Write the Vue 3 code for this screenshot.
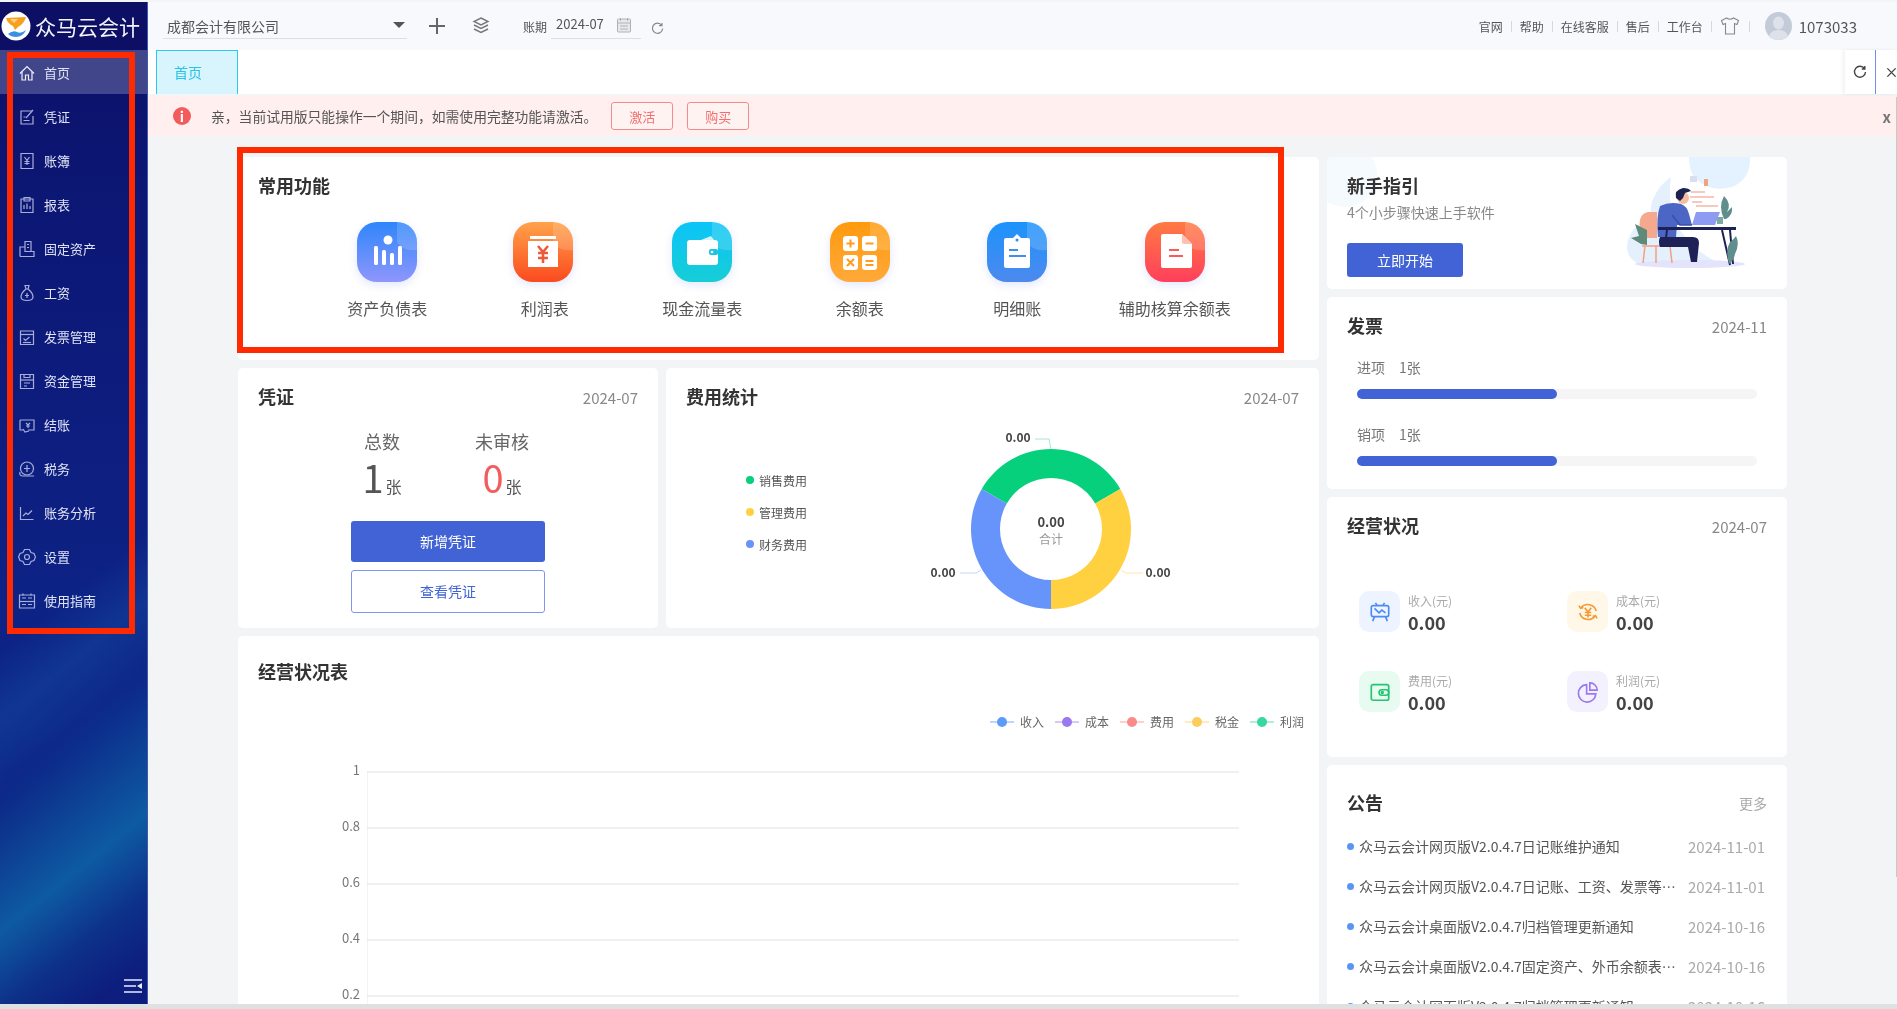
<template>
  <div class="page">
    <div class="shell">
      <aside class="sidebar">
        <div class="brand">
          <svg class="brand-logo" viewBox="0 0 30 30">
            <circle cx="15" cy="15" r="14.5" fill="#fff" />
            <path d="M5 7 L25 6 Q23 13 17 16 L14 19 L12 15 Q7 13 5 7Z" fill="#f5a11f" />
            <path d="M9 8 L17 8 L13 12Z" fill="#fdd27a" />
            <path d="M7 23 Q12 19 16 21 Q20 23 25 19 Q22 26 15 26 Q10 26 7 23Z" fill="#3d8fe0" />
          </svg>
          <span class="brand-name">众马云会计</span>
        </div>
        <nav class="nav">
          <a v-for="(item, i) in navItems" :key="item.label" class="nav-item" :class="{ active: i === 0 }">
            <svg class="nav-icon" viewBox="0 0 18 18">
              <path v-for="d in item.icon" :key="d" :d="d" />
            </svg>
            <span>{{ item.label }}</span>
          </a>
        </nav>
        <svg class="collapse" viewBox="0 0 20 16">
          <path d="M1 2h18M1 8h12M1 14h18" />
          <path class="solid" d="M19 5v6l-5-3z" />
        </svg>
      </aside>

      <div class="main">
        <header class="topbar">
          <div class="company">
            <span>成都会计有限公司</span>
            <i class="caret"></i>
          </div>
          <svg class="bar-plus" viewBox="0 0 18 18"><path d="M9 1v16M1 9h16" /></svg>
          <svg class="bar-layers" viewBox="0 0 18 18">
            <path d="M9 1l7 3.5-7 3.5-7-3.5z" />
            <path d="M2 8l7 3.5L16 8" />
            <path d="M2 12l7 3.5 7-3.5" />
          </svg>
          <span class="period-label">账期</span>
          <div class="period">
            <span>2024-07</span>
            <svg class="cal" viewBox="0 0 16 16">
              <rect x="1.5" y="2" width="13" height="13" rx="1" />
              <path d="M1.5 6h13M4.5 1v3M11.5 1v3M4 9h8M4 12h8" />
            </svg>
          </div>
          <svg class="bar-refresh" viewBox="0 0 14 14"><path d="M11.5 3.5A5.5 5.5 0 1 0 12.5 7M11.8 1v3h-3" /></svg>
          <div class="top-links">
            <template v-for="link in topLinks" :key="link">
              <span>{{ link }}</span>
              <i class="sep"></i>
            </template>
            <svg class="shirt" viewBox="0 0 20 20">
              <path d="M6.5 2L1.5 4.5l1.5 4 2.5-1V18h9V7.5l2.5 1 1.5-4-5-2.5q-3.5 2.5-7 0z" />
            </svg>
            <i class="sep last"></i>
            <svg class="avatar" viewBox="0 0 27 28">
              <ellipse cx="13.5" cy="14" rx="13.5" ry="14" fill="#c3cbd9" />
              <ellipse cx="13.5" cy="11" rx="5.5" ry="6.5" fill="#dde2ea" />
              <path d="M4 25q1-7 9.5-7t9.5 7q-4 3-9.5 3t-9.5-3z" fill="#dde2ea" />
            </svg>
            <span class="user-id">1073033</span>
          </div>
        </header>

        <div class="tabs">
          <div class="tab">首页</div>
          <div class="tab-tools">
            <svg class="tool-refresh" viewBox="0 0 14 14"><path d="M11.5 3.5A5.5 5.5 0 1 0 12.5 7M11.8 1v3h-3" /></svg>
            <i class="tool-line"></i>
            <svg class="tool-close" viewBox="0 0 12 12"><path d="M1.5 1.5l9 9M10.5 1.5l-9 9" /></svg>
          </div>
        </div>

        <div class="alert">
          <span class="alert-icon">i</span>
          <span class="alert-text">亲，当前试用版只能操作一个期间，如需使用完整功能请激活。</span>
          <button class="alert-btn">激活</button>
          <button class="alert-btn">购买</button>
          <span class="alert-x">x</span>
        </div>

        <div class="content">
          <div class="col-left">
            <section class="card shortcuts">
              <h3 class="card-title">常用功能</h3>
              <div class="shortcut-grid">
                <div v-for="s in shortcuts" :key="s.key" class="shortcut">
                  <svg class="shortcut-icon" viewBox="0 0 60 60">
                    <defs>
                      <linearGradient :id="'g-' + s.key" x1="0" y1="0" x2="0" y2="1">
                        <stop offset="0" :stop-color="s.from" />
                        <stop offset="1" :stop-color="s.to" />
                      </linearGradient>
                    </defs>
                    <rect width="60" height="60" rx="20" :fill="'url(#g-' + s.key + ')'" />
                    <path d="M40 0h0a20 20 0 0 1 20 20v8q-14 2-20-8z" fill="#fff" opacity=".16" />
                    <template v-if="s.key === 'balance'">
                      <circle cx="31" cy="18" r="4.5" fill="#fff" />
                      <rect x="17" y="24" width="4" height="19" rx="1.5" fill="#fff" />
                      <rect x="25" y="28" width="4" height="15" rx="1.5" fill="#fff" />
                      <rect x="33" y="31" width="4" height="12" rx="1.5" fill="#fff" />
                      <rect x="41" y="24" width="4" height="19" rx="1.5" fill="#fff" />
                    </template>
                    <template v-else-if="s.key === 'profit'">
                      <rect x="17" y="14" width="26" height="3" fill="#fff" />
                      <rect x="15" y="19" width="30" height="26" fill="#fff" />
                      <path d="M25 24l5 6 5-6M30 30v11M25 31h10M25 36h10" fill="none" stroke="#ee5a38" stroke-width="2.5" />
                    </template>
                    <template v-else-if="s.key === 'cash'">
                      <path d="M29 18l10-4 3 4z" fill="#fff" opacity=".8" />
                      <rect x="15" y="18" width="31" height="25" rx="3" fill="#fff" />
                      <rect x="37" y="27" width="9" height="6" rx="2" fill="#1cc5e0" />
                      <circle cx="40" cy="30" r="1.3" fill="#fff" />
                    </template>
                    <template v-else-if="s.key === 'sum'">
                      <rect x="13" y="14" width="15" height="15" rx="3" fill="#fff" />
                      <rect x="32" y="14" width="15" height="15" rx="3" fill="#fff" />
                      <rect x="13" y="33" width="15" height="15" rx="3" fill="#fff" />
                      <rect x="32" y="33" width="15" height="15" rx="3" fill="#fff" />
                      <path d="M16.5 21.5h8M20.5 17.5v8M35.5 21.5h8M17 37l7 7M24 37l-7 7M35.5 39h8M35.5 43h8" stroke="#ff9c1a" stroke-width="2" />
                    </template>
                    <template v-else-if="s.key === 'detail'">
                      <path d="M19 16h7l4-4 4 4h7a2 2 0 0 1 2 2v26a2 2 0 0 1-2 2H19a2 2 0 0 1-2-2V18a2 2 0 0 1 2-2z" fill="#fff" />
                      <circle cx="30" cy="18" r="1.5" fill="#2a8cf5" />
                      <path d="M22 28h9M22 34h17" stroke="#3f8ef0" stroke-width="2.2" />
                    </template>
                    <template v-else>
                      <path d="M18 12h19l10 10v22a2 2 0 0 1-2 2H18a2 2 0 0 1-2-2V14a2 2 0 0 1 2-2z" fill="#fff" />
                      <path d="M37 12l10 10H39a2 2 0 0 1-2-2z" fill="#ffc0b0" />
                      <path d="M24 28h10M24 34h14" stroke="#fb5a58" stroke-width="2.2" />
                    </template>
                  </svg>
                  <span class="shortcut-label">{{ s.label }}</span>
                </div>
              </div>
            </section>

            <div class="row-mid">
              <section class="card voucher">
                <div class="card-head">
                  <h3 class="card-title">凭证</h3>
                  <span class="card-date">2024-07</span>
                </div>
                <div class="voucher-stats">
                  <div class="stat">
                    <span class="stat-label">总数</span>
                    <span class="stat-num"><b>1</b><small>张</small></span>
                  </div>
                  <div class="stat">
                    <span class="stat-label">未审核</span>
                    <span class="stat-num red"><b>0</b><small>张</small></span>
                  </div>
                </div>
                <button class="btn-primary">新增凭证</button>
                <button class="btn-outline">查看凭证</button>
              </section>

              <section class="card fees">
                <div class="card-head">
                  <h3 class="card-title">费用统计</h3>
                  <span class="card-date">2024-07</span>
                </div>
                <div class="fees-body">
                  <ul class="fee-legend">
                    <li v-for="f in feeLegend" :key="f.label">
                      <i class="legend-dot" :class="f.cls"></i>{{ f.label }}
                    </li>
                  </ul>
                  <svg class="donut" viewBox="921 420 260 208">
                    <path :d="ringSeg(-60, 60)" fill="#06d07c" />
                    <path :d="ringSeg(60, 180)" fill="#ffd040" />
                    <path :d="ringSeg(180, 300)" fill="#6694fb" />
                    <path d="M1051 449l-2-10h-14" class="lead green" />
                    <path d="M1121 570l5 3h17" class="lead yellow" />
                    <path d="M981 570l-5 3h-16" class="lead blue" />
                    <text x="1018" y="442" class="pie-val" text-anchor="middle">0.00</text>
                    <text x="943" y="577" class="pie-val" text-anchor="middle">0.00</text>
                    <text x="1158" y="577" class="pie-val" text-anchor="middle">0.00</text>
                    <text x="1051" y="527" class="pie-total" text-anchor="middle">0.00</text>
                    <text x="1051" y="544" class="pie-sub" text-anchor="middle">合计</text>
                  </svg>
                </div>
              </section>
            </div>

            <section class="card trend">
              <h3 class="card-title">经营状况表</h3>
              <div class="trend-legend">
                <span v-for="t in trendLegend" :key="t.label" class="trend-item">
                  <i class="trend-mark" :class="t.cls"></i>{{ t.label }}
                </span>
              </div>
              <svg class="trend-grid" viewBox="238 760 1081 250">
                <path d="M367.5 773V1010" class="axis" />
                <g v-for="g in gridLines" :key="g.label">
                  <path :d="`M367 ${g.y}H1239`" class="grid-line" />
                  <text x="360" :y="g.y + 3" class="axis-label" text-anchor="end">{{ g.label }}</text>
                </g>
              </svg>
            </section>
          </div>

          <div class="col-right">
            <section class="card guide">
              <i class="guide-blob"></i>
              <div class="guide-text">
                <h3 class="card-title">新手指引</h3>
                <p class="guide-sub">4个小步骤快速上手软件</p>
                <button class="btn-start">立即开始</button>
              </div>
              <svg class="guide-art" viewBox="1627 157 124 112">
                <path d="M1689 157h61q1 22-18 30-24 6-38-10-5-8-5-20z" fill="#e4f1fe" />
                <path d="M1671 177q-12 8-18 22-3 8-2 14l-6 6q-19 14-18 30 2 14 20 17h80q-30-10-50-40-10-20-6-49z" fill="#e5f0fd" />
                <ellipse cx="1690" cy="264" rx="55" ry="4" fill="#e3e4fb" />
                <path d="M1691 192h14M1690 197h24M1692 202h10M1696 206h22" stroke="#f5b7a5" stroke-width="1.5" />
                <rect x="1690" y="176" width="7" height="6" fill="#d8dfee" />
                <rect x="1704" y="179" width="4" height="7" fill="#f3a27f" />
                <path d="M1640 228q-2-14 8-16h9v26h-14z" fill="#f4a98e" />
                <path d="M1642 246h30M1645 246l-2 17M1670 246l2 17M1656 246v17" stroke="#f2a080" stroke-width="1.5" fill="none" />
                <path d="M1647 230l-12-6 4 12-8 2 10 6 6 1z" fill="#5e8a7a" />
                <path d="M1660 206q10-5 21-2 6 2 8 10l3 11h-15l-1 12h-18q-2-20 2-31z" fill="#4c66c5" />
                <path d="M1672 215l8 10h12" stroke="#3a4fa5" stroke-width="1.5" fill="none" />
                <circle cx="1683" cy="198" r="6" fill="#f6bd9e" />
                <path d="M1676 198q-2-8 7-10 6 0 8 3l-6 2-2 5-3 3z" fill="#1d2350" />
                <path d="M1660 237h33q6 0 6 6l-2 19h-6l-3-15h-28q-2-5 0-10z" fill="#1d2156" />
                <path d="M1658 227h78v3h-78z" fill="#1d2156" />
                <path d="M1667 230l-1 8M1722 230l8 35M1730 230l3 34" stroke="#1d2156" stroke-width="2" fill="none" />
                <path d="M1696 212h24l-5 13h-23z" fill="#8d9bf2" />
                <path d="M1717 217h6v7h-6z" fill="#7eaaa5" />
                <path d="M1724 219q-6-12 0-23 8 8 3 16l5-5q1 8-6 12z" fill="#5f8e8c" />
                <path d="M1729 264q-4-14 1-22 4-3 6-6 4 8-1 18-1 6-6 10z" fill="#5f8e8c" />
              </svg>
            </section>

            <section class="card invoice">
              <div class="card-head">
                <h3 class="card-title">发票</h3>
                <span class="card-date">2024-11</span>
              </div>
              <div v-for="b in invoiceBars" :key="b.label" class="inv-row">
                <div class="inv-label"><span>{{ b.label }}</span><span>{{ b.count }}</span></div>
                <div class="inv-track">
                  <div class="inv-fill" :style="{ width: b.pct + '%' }"></div>
                </div>
              </div>
            </section>

            <section class="card business">
              <div class="card-head">
                <h3 class="card-title">经营状况</h3>
                <span class="card-date">2024-07</span>
              </div>
              <div class="biz-grid">
                <div v-for="b in bizItems" :key="b.label" class="biz-item">
                  <div class="biz-icon" :class="b.cls">
                    <svg viewBox="0 0 24 24">
                      <template v-if="b.cls === 'income'">
                        <rect x="2.5" y="5" width="19" height="12" rx="2" />
                        <path d="M7 2l2 3M17 2l-2 3M6 17l-2 5M18 17l2 5M6 8l5 5 3-3 4 3" />
                      </template>
                      <template v-else-if="b.cls === 'cost'">
                        <path d="M4 8A9.5 9.5 0 0 1 21 11M20 16A9.5 9.5 0 0 1 3 13" />
                        <path d="M2 5l2 3 3-1M22 19l-2-3-3 1M8.5 7.5L12 12l3.5-4.5M12 12v6M8.5 12.5h7M8.5 15.5h7" />
                      </template>
                      <template v-else-if="b.cls === 'fee'">
                        <rect x="2.5" y="4" width="19" height="17" rx="2" />
                        <rect x="11" y="9.5" width="10.5" height="6" rx="3" />
                        <circle cx="14.5" cy="12.5" r="1" />
                      </template>
                      <template v-else>
                        <path d="M10.5 4A9.5 9.5 0 1 0 20.5 14H10.5z" />
                        <path d="M14 2a8 8 0 0 1 8 8h-8z" />
                      </template>
                    </svg>
                  </div>
                  <div class="biz-text">
                    <span class="biz-label">{{ b.label }}</span>
                    <span class="biz-value">{{ b.value }}</span>
                  </div>
                </div>
              </div>
            </section>

            <section class="card notice">
              <div class="card-head">
                <h3 class="card-title">公告</h3>
                <span class="card-more">更多</span>
              </div>
              <ul class="notice-list">
                <li v-for="n in notices" :key="n.title + n.date">
                  <i class="notice-dot"></i>
                  <span class="notice-title">{{ n.title }}</span>
                  <span class="notice-date">{{ n.date }}</span>
                </li>
              </ul>
            </section>
          </div>
        </div>
      </div>
    </div>

    <!-- red marks and the scroll thumb sit over the screenshot -->
    <i class="scroll-thumb"></i>
    <i class="mark mark-nav"></i>
    <i class="mark mark-func"></i>
  </div>
</template>

<script setup>
const navItems = [
  { label: '首页', icon: ['M2 9.5L9 2.5l7 7', 'M4 8v8h3.5v-5h3v5H14V8'] },
  { label: '凭证', icon: ['M14 3H3v13h12V8', 'M8 10l7-8', 'M5.5 9h2M5.5 12.5h6'] },
  { label: '账簿', icon: ['M3 1.5h12v15H3z', 'M6.5 5l2.5 3.5L11.5 5M9 8.5V13M6.5 9.5h5M6.5 11.5h5'] },
  { label: '报表', icon: ['M3 3h12v13.5H3z', 'M6 1.5h6V5H6z', 'M6 13V9M9 13V7.5M12 13v-3'] },
  { label: '固定资产', icon: ['M7 1.5h6v10H7z', 'M2 16.5h14v-5h-3', 'M2 16.5V7h5', 'M9 4.5h2M9 7.5h2'] },
  { label: '工资', icon: ['M7 1.5h4L10 5H8z', 'M8 5Q3 9 3 13q0 3.5 6 3.5t6-3.5Q15 9 10 5', 'M9 9v5M7 11.5h4'] },
  { label: '发票管理', icon: ['M2.5 3h13v13.5h-13z', 'M2.5 6.5h13', 'M5.5 10.5l2 2 4-3.5', 'M5 14.5h8'] },
  { label: '资金管理', icon: ['M2.5 2.5h13v14h-13z', 'M2.5 8h13', 'M6 2.5v3h6v-3', 'M6 11h6M6 14h3'] },
  { label: '结账', icon: ['M2 4h14v10h-6', 'M2 4v10h3', 'M8 7l2 2 2-2M10 9v3M8 10h4', 'M5 13l2 3 4-1'] },
  { label: '税务', icon: ['M9 2a6.5 6.5 0 1 1 0 13 6.5 6.5 0 0 1 0-13z', 'M2 12q-1 4 3 4h11', 'M6 8.5h6M9 5v7'] },
  { label: '账务分析', icon: ['M2.5 3v12.5h13', 'M5 12l3-3 2 1.5 4-4'] },
  { label: '设置', icon: ['M6.5 1.5h5l1.5 3 3 1L17.5 9 16 12.5l-3 1-1.5 3h-5L5 13.5l-3-1L.5 9 2 5.5l3-1z', 'M9 6.5a2.5 2.5 0 1 1 0 5 2.5 2.5 0 0 1 0-5z'] },
  { label: '使用指南', icon: ['M1.5 3h15v13h-15z', 'M1.5 9.5h15', 'M4 6h4M10 6h4M4 12.5h4M10 12.5h4', 'M5 1.5v2M13 1.5v2'] }
]

const topLinks = ['官网', '帮助', '在线客服', '售后', '工作台']

const shortcuts = [
  { key: 'balance', label: '资产负债表', from: '#2f86fb', to: '#8f96fc' },
  { key: 'profit', label: '利润表', from: '#ffa24a', to: '#fb4a1e' },
  { key: 'cash', label: '现金流量表', from: '#0cc4f7', to: '#16cdd6' },
  { key: 'sum', label: '余额表', from: '#ff9a0c', to: '#ffa93a' },
  { key: 'detail', label: '明细账', from: '#1c93fb', to: '#4d89ee' },
  { key: 'aux', label: '辅助核算余额表', from: '#ff7a42', to: '#ff3f5c' }
]

const feeLegend = [
  { label: '销售费用', cls: 'green' },
  { label: '管理费用', cls: 'yellow' },
  { label: '财务费用', cls: 'blue' }
]

const trendLegend = [
  { label: '收入', cls: 'c-income' },
  { label: '成本', cls: 'c-cost' },
  { label: '费用', cls: 'c-fee' },
  { label: '税金', cls: 'c-tax' },
  { label: '利润', cls: 'c-profit' }
]

const gridLines = [
  { label: '1', y: 773 },
  { label: '0.8', y: 829 },
  { label: '0.6', y: 885 },
  { label: '0.4', y: 941 },
  { label: '0.2', y: 997 }
]

const invoiceBars = [
  { label: '进项', count: '1张', pct: 50 },
  { label: '销项', count: '1张', pct: 50 }
]

const bizItems = [
  { label: '收入(元)', value: '0.00', cls: 'income' },
  { label: '成本(元)', value: '0.00', cls: 'cost' },
  { label: '费用(元)', value: '0.00', cls: 'fee' },
  { label: '利润(元)', value: '0.00', cls: 'profit' }
]

const notices = [
  { title: '众马云会计网页版V2.0.4.7日记账维护通知', date: '2024-11-01' },
  { title: '众马云会计网页版V2.0.4.7日记账、工资、发票等功能更新通知', date: '2024-11-01' },
  { title: '众马云会计桌面版V2.0.4.7归档管理更新通知', date: '2024-10-16' },
  { title: '众马云会计桌面版V2.0.4.7固定资产、外币余额表功能更新通知', date: '2024-10-16' },
  { title: '众马云会计网页版V2.0.4.7归档管理更新通知', date: '2024-10-16' }
]

// donut ring segment, angles clockwise from 12 o'clock
const ringSeg = (a0, a1) => {
  const cx = 1051
  const cy = 529
  const R = 80
  const r = 51
  const pt = (rad, a) => {
    const t = (a * Math.PI) / 180
    return `${(cx + rad * Math.sin(t)).toFixed(2)} ${(cy - rad * Math.cos(t)).toFixed(2)}`
  }
  return `M${pt(R, a0)}A${R} ${R} 0 0 1 ${pt(R, a1)}L${pt(r, a1)}A${r} ${r} 0 0 0 ${pt(r, a0)}Z`
}
</script>

<style>
html,
body {
  margin: 0;
  height: 100%;
  overflow: hidden;
  background: #dfe0e2;
}
</style>

<style scoped>
* {
  box-sizing: border-box;
}

.page {
  position: relative;
  width: 1897px;
  height: 1009px;
  overflow: hidden;
  font-family: "Noto Sans CJK SC", "Liberation Sans", sans-serif;
  color: #555;
}

.shell {
  display: flex;
  height: 1004px;
  padding-top: 2px;
  overflow: hidden;
  background: #f2f4f6;
  filter: blur(0.55px);
}

.sidebar {
  position: relative;
  flex: 0 0 148px;
  display: flex;
  flex-direction: column;
  border-right: 1px solid #3f5aa8;
  background:
    linear-gradient(141deg, transparent 70%, rgba(14, 105, 170, 0.8) 83%, rgba(14, 90, 160, 0.3) 90%, transparent 96%),
    linear-gradient(141deg, transparent 58%, rgba(20, 70, 160, 0.5) 64%, transparent 72%),
    linear-gradient(180deg, #0c0f63 0, #0c1470 12%, #0d1e80 45%, #0c2688 72%, #0d1d7d 100%);
}

.brand {
  display: flex;
  align-items: center;
  height: 48px;
  padding-left: 1px;
  background: #0c0f63;
}

.brand-logo {
  width: 30px;
  height: 30px;
}

.brand-name {
  margin-left: 4px;
  font-size: 21px;
  color: #f3f4fa;
  white-space: nowrap;
}

.nav-item {
  display: flex;
  align-items: center;
  height: 44px;
  padding: 1.5px 0 0 18px;
  font-size: 13px;
  color: #dfe3f5;
}

.nav-item.active {
  background: rgba(255, 255, 255, 0.22);
}

.nav-icon {
  width: 18px;
  height: 18px;
  margin-right: 8px;
  fill: none;
  stroke: #a7afd8;
  stroke-width: 1.2;
}

.active .nav-icon {
  stroke: #eef0fa;
}

.collapse {
  position: absolute;
  right: 4px;
  bottom: 10px;
  width: 20px;
  height: 16px;
  fill: none;
  stroke: #e8ecf8;
  stroke-width: 1.5;
}

.collapse .solid {
  fill: #e8ecf8;
  stroke: none;
}

.main {
  flex: 1;
  min-width: 0;
  display: flex;
  flex-direction: column;
}

.topbar {
  display: flex;
  align-items: center;
  flex: 0 0 48px;
  padding-left: 15px;
  background: #f7f9fd;
}

.company {
  display: flex;
  align-items: center;
  justify-content: space-between;
  width: 244px;
  height: 26px;
  padding: 0 2px 0 4px;
  font-size: 14px;
  border-bottom: 1px solid #dcdfe6;
}

.caret {
  width: 0;
  height: 0;
  border-left: 6px solid transparent;
  border-right: 6px solid transparent;
  border-top: 6px solid #555;
  margin-top: -2px;
}

.bar-plus {
  width: 18px;
  height: 18px;
  margin-left: 21px;
  fill: none;
  stroke: #666;
  stroke-width: 2;
}

.bar-layers {
  width: 18px;
  height: 18px;
  margin-left: 26px;
  fill: none;
  stroke: #777;
  stroke-width: 1.4;
}

.period-label {
  margin-left: 33px;
  font-size: 12px;
}

.period {
  display: flex;
  align-items: center;
  width: 90px;
  height: 26px;
  margin-left: 4px;
  padding-left: 5px;
  padding-bottom: 4px;
  font-size: 13px;
  border-bottom: 1px solid #dcdfe6;
}

.cal {
  width: 16px;
  height: 16px;
  margin-left: 12px;
  margin-top: 3px;
  fill: #e8e9ed;
  stroke: #aeb2b8;
  stroke-width: 1;
}

.bar-refresh {
  width: 13px;
  height: 13px;
  margin-left: 10px;
  margin-top: 4px;
  fill: none;
  stroke: #888;
  stroke-width: 1.3;
}

.top-links {
  display: flex;
  align-items: center;
  margin-left: auto;
  padding-right: 40px;
  font-size: 12px;
}

.sep {
  width: 1px;
  height: 11px;
  margin: 0 8px;
  background: #d5d8de;
}

.sep.last {
  margin: 0 15px 0 9px;
}

.shirt {
  width: 20px;
  height: 20px;
  fill: none;
  stroke: #888;
  stroke-width: 1.1;
}

.avatar {
  width: 27px;
  height: 28px;
}

.user-id {
  margin-left: 7px;
  font-size: 15px;
}

.tabs {
  display: flex;
  flex: 0 0 44px;
  padding-left: 8px;
  background: #fff;
}

.tab {
  width: 82px;
  padding-left: 17px;
  line-height: 42px;
  font-size: 14px;
  color: #27c3e8;
  background: #d8f4fd;
  border: 1px solid #2accea;
  border-bottom: none;
}

.tab-tools {
  display: flex;
  align-items: center;
  width: 52px;
  margin-left: auto;
  background: #fff;
  box-shadow: -2px 0 4px rgba(0, 0, 0, 0.06);
}

.tool-refresh {
  width: 14px;
  height: 14px;
  margin-left: 8px;
  fill: none;
  stroke: #444;
  stroke-width: 1.4;
}

.tool-line {
  width: 1px;
  height: 44px;
  margin-left: 8px;
  background: #6f8fe8;
}

.tool-close {
  width: 11px;
  height: 11px;
  margin-left: 10px;
  fill: none;
  stroke: #444;
  stroke-width: 1.5;
}

.alert {
  display: flex;
  align-items: center;
  flex: 0 0 40px;
  margin-top: 2px;
  padding-left: 25px;
  background: #ffefee;
}

.alert-icon {
  width: 18px;
  height: 18px;
  border-radius: 50%;
  background: #f25c5c;
  color: #fff;
  font-size: 14px;
  font-weight: 700;
  line-height: 18px;
  text-align: center;
}

.alert-text {
  margin-left: 20px;
  font-size: 13.8px;
}

.alert-btn {
  width: 62px;
  height: 28px;
  margin-left: 14px;
  padding: 0;
  font-family: inherit;
  font-size: 13px;
  color: #f26f6f;
  background: #fff3f2;
  border: 1px solid #f08c8c;
  border-radius: 3px;
}

.alert-x {
  margin-left: auto;
  padding-right: 6px;
  font-size: 15px;
  font-weight: 700;
  color: #777;
}

.content {
  display: flex;
  flex: 1;
  min-height: 0;
  gap: 8px;
  padding: 21px 0 0 90px;
  overflow: hidden;
}

.col-left {
  flex: 0 0 1081px;
  min-width: 0;
  display: flex;
  flex-direction: column;
  gap: 8px;
}

.col-right {
  flex: 0 0 460px;
  min-width: 0;
  display: flex;
  flex-direction: column;
  gap: 8px;
}

.card {
  flex-shrink: 0;
  padding: 17px 20px;
  background: #fff;
  border-radius: 5px;
}

.card-head {
  display: flex;
  align-items: center;
  justify-content: space-between;
}

.card-title {
  margin: 0 0 2px;
  font-size: 18px;
  line-height: 22px;
  font-weight: 700;
  color: #333;
}

.card-date {
  font-size: 15px;
  color: #888;
}

.shortcuts {
  height: 203px;
}

.shortcut-grid {
  display: grid;
  grid-template-columns: repeat(6, 157.5px);
  margin: 26px 0 0 50.5px;
}

.shortcut {
  display: flex;
  flex-direction: column;
  align-items: center;
}

.shortcut-icon {
  width: 60px;
  height: 60px;
  overflow: visible;
  filter: drop-shadow(0 3px 4px rgba(100, 120, 240, 0.18));
}

.shortcut:nth-child(2) .shortcut-icon {
  margin-left: -4px;
}

.shortcut-label {
  margin-top: 16px;
  font-size: 16px;
  line-height: 20px;
  color: #555;
  white-space: nowrap;
}

.row-mid {
  display: flex;
  flex-shrink: 0;
  gap: 8px;
}

.voucher {
  flex: 0 0 420px;
  height: 260px;
}

.voucher-stats {
  display: flex;
  justify-content: center;
  margin: 20px 12px 0 0;
}

.stat {
  display: flex;
  flex-direction: column;
  align-items: center;
  width: 120px;
}

.stat-label {
  font-size: 18px;
  line-height: 24px;
  color: #666;
}

.stat-num {
  height: 44px;
  margin-top: 2px;
  line-height: 44px;
  color: #555;
}

.stat-num b {
  font-size: 38px;
  font-weight: 400;
}

.stat-num small {
  margin-left: 2px;
  font-size: 16px;
}

.stat-num.red b {
  color: #f25c5c;
}

.btn-primary,
.btn-outline {
  display: block;
  width: 194px;
  padding: 0 0 2px;
  margin: 0 auto;
  font-family: inherit;
  font-size: 14px;
  border-radius: 3px;
}

.btn-primary {
  height: 41px;
  margin-top: 22px;
  color: #fff;
  background: #4163d6;
  border: none;
}

.btn-outline {
  height: 43px;
  margin-top: 8px;
  color: #4163d6;
  background: #fff;
  border: 1px solid #7f97e6;
}

.fees {
  flex: 0 0 653px;
  height: 260px;
}

.fees-body {
  display: flex;
  margin-top: 11px;
}

.fee-legend {
  flex: 0 0 235px;
  margin: 50px 0 0;
  padding: 0 0 0 60px;
  list-style: none;
  font-size: 12px;
  color: #555;
}

.fee-legend li {
  display: flex;
  align-items: center;
  height: 20px;
  margin-bottom: 12px;
}

.legend-dot {
  width: 8px;
  height: 8px;
  margin-right: 5px;
  border-radius: 50%;
}

.legend-dot.green {
  background: #06d07c;
}

.legend-dot.yellow {
  background: #ffd040;
}

.legend-dot.blue {
  background: #6694fb;
}

.donut {
  width: 260px;
  height: 208px;
}

.lead {
  fill: none;
  stroke-width: 1;
}

.lead.green {
  stroke: #9feac9;
}

.lead.yellow {
  stroke: #ffe7a6;
}

.lead.blue {
  stroke: #c2d4fd;
}

.pie-val {
  font-size: 12px;
  font-weight: 700;
  fill: #444;
}

.pie-total {
  font-size: 13px;
  font-weight: 700;
  fill: #444;
}

.pie-sub {
  font-size: 12px;
  fill: #999;
}

.trend {
  flex: 1 0 auto;
  padding: 24px 15px 0 20px;
  overflow: hidden;
}

.trend-legend {
  display: flex;
  justify-content: flex-end;
  gap: 11px;
  margin-top: 30px;
  font-size: 12px;
  line-height: 20px;
  color: #666;
}

.trend-item {
  display: flex;
  align-items: center;
}

.trend-mark {
  position: relative;
  width: 24px;
  height: 2px;
  margin-right: 6px;
}

.trend-mark::after {
  content: "";
  position: absolute;
  left: 7px;
  top: -4px;
  width: 10px;
  height: 10px;
  border-radius: 50%;
  background: inherit;
}

.trend-mark::before {
  content: "";
  position: absolute;
  inset: 0;
  background: rgba(255, 255, 255, 0.6);
}

.c-income {
  background: #5b9cf8;
}

.c-cost {
  background: #9a78ee;
}

.c-fee {
  background: #fb8a8a;
}

.c-tax {
  background: #fdcc5e;
}

.c-profit {
  background: #38d6a0;
}

.trend-grid {
  display: block;
  width: 1081px;
  height: 250px;
  margin: 27px 0 0 -20px;
}

.grid-line {
  stroke: #e2e2e4;
  stroke-width: 1.2;
}

.axis {
  stroke: #f3f3f4;
  stroke-width: 1;
}

.axis-label {
  font-size: 13px;
  fill: #777;
}

.guide {
  position: relative;
  display: flex;
  justify-content: space-between;
  height: 132px;
  padding: 0 36px 0 20px;
  overflow: hidden;
}

.guide-blob {
  position: absolute;
  left: -14px;
  top: -14px;
  width: 64px;
  height: 64px;
  border-radius: 50%;
  background: #f5faff;
}

.guide-text {
  position: relative;
  padding-top: 17px;
}

.guide-sub {
  margin: 6px 0 0;
  font-size: 14px;
  line-height: 20px;
  color: #888;
}

.btn-start {
  display: block;
  width: 116px;
  height: 34px;
  margin-top: 21px;
  padding: 0;
  font-family: inherit;
  font-size: 14px;
  color: #fff;
  background: #4163d6;
  border: none;
  border-radius: 3px;
}

.guide-art {
  width: 124px;
  height: 112px;
}

.invoice {
  height: 192px;
}

.inv-row {
  padding: 19px 10px 0;
}

.inv-row + .inv-row {
  padding-top: 25px;
}

.inv-label {
  display: flex;
  gap: 14px;
  font-size: 14px;
  line-height: 20px;
  color: #777;
}

.inv-track {
  height: 10px;
  margin-top: 12px;
  border-radius: 5px;
  background: #f5f5f5;
}

.inv-fill {
  height: 100%;
  border-radius: 5px;
  background: #4163d6;
}

.business {
  height: 260px;
}

.biz-grid {
  display: grid;
  grid-template-columns: 208px 208px;
  row-gap: 38px;
  margin: 53px 0 0 12px;
}

.biz-item {
  display: flex;
  gap: 8px;
}

.biz-icon {
  display: flex;
  align-items: center;
  justify-content: center;
  width: 41px;
  height: 41px;
  border-radius: 10px;
}

.biz-icon svg {
  width: 22px;
  height: 22px;
  fill: none;
  stroke-width: 1.8;
}

.income {
  background: #edf4ff;
  stroke: #4c8bf5;
}

.cost {
  background: #fff8e8;
  stroke: #f59a33;
}

.fee {
  background: #e8fbf0;
  stroke: #22c670;
}

.profit {
  background: #f4f1ff;
  stroke: #9a78ee;
}

.biz-text {
  display: flex;
  flex-direction: column;
}

.biz-label {
  font-size: 12px;
  line-height: 20px;
  color: #aaa;
}

.biz-value {
  font-size: 18px;
  line-height: 22px;
  font-weight: 700;
  color: #444;
}

.notice {
  flex: 1 0 auto;
  padding-top: 26px;
}

.card-more {
  font-size: 14px;
  color: #aaa;
}

.notice-list {
  margin: 11px 0 0;
  padding: 0;
  list-style: none;
}

.notice-list li {
  display: flex;
  align-items: center;
  height: 40px;
  font-size: 14px;
}

.notice-dot {
  flex: 0 0 7px;
  height: 7px;
  margin-right: 5px;
  border-radius: 50%;
  background: #5b95f4;
}

.notice-title {
  flex: 0 0 320px;
  overflow: hidden;
  white-space: nowrap;
  text-overflow: ellipsis;
}

.notice-date {
  margin-left: 9px;
  font-size: 15px;
  color: #aaa;
}

.scroll-thumb {
  position: absolute;
  right: 0;
  top: 97px;
  width: 1px;
  height: 780px;
  background: #c9c9c9;
}

.mark {
  position: absolute;
  border: 6px solid #ff2a00;
  pointer-events: none;
}

.mark-nav {
  left: 7px;
  top: 52px;
  width: 128px;
  height: 582px;
}

.mark-func {
  left: 237px;
  top: 147px;
  width: 1047px;
  height: 206px;
}
</style>
